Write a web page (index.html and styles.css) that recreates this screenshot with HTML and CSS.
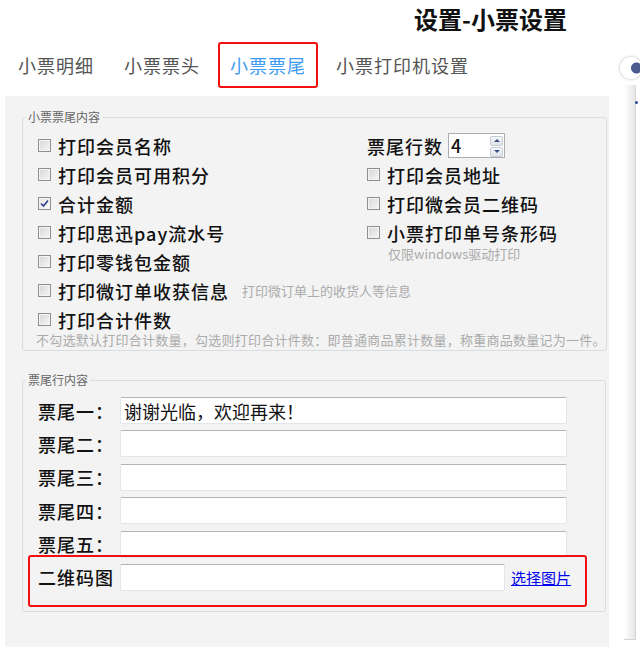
FILE: index.html
```html
<!DOCTYPE html>
<html lang="zh-CN">
<head>
    <meta charset="UTF-8">
    <title>设置-小票设置</title>
    <link rel="stylesheet" href="styles.css">
</head>
<body>
    <div class="page">
        <div class="main">
            <h1 class="title">设置-小票设置</h1>

            <div class="tabs">
                <span class="tab">小票明细</span>
                <span class="tab">小票票头</span>
                <span class="tab active">小票票尾</span>
                <span class="tab">小票打印机设置</span>
            </div>

            <div class="panel">
                <!-- 小票票尾内容 -->
                <fieldset class="group tail-opts">
                    <legend>小票票尾内容</legend>
                    <div class="cols">
                        <div class="col-left">
                            <label class="opt"><span class="cb"></span>打印会员名称</label>
                            <label class="opt"><span class="cb"></span>打印会员可用积分</label>
                            <label class="opt"><span class="cb on"><svg width="9" height="9" viewBox="0 0 9 9"><path d="M1 4.5 L3.5 7 L8 1.5" fill="none" stroke="#2b3f8f" stroke-width="1.6"/></svg></span>合计金额</label>
                            <label class="opt"><span class="cb"></span>打印思迅pay流水号</label>
                            <label class="opt"><span class="cb"></span>打印零钱包金额</label>
                            <label class="opt"><span class="cb"></span>打印微订单收获信息<span class="hint inline">打印微订单上的收货人等信息</span></label>
                            <label class="opt"><span class="cb"></span>打印合计件数</label>
                        </div>
                        <div class="col-right">
                            <div class="opt">
                                票尾行数
                                <div class="spin">
                                    <span class="spin-val">4</span>
                                    <span class="spin-btns">
                                        <span class="spin-btn"><i class="up"></i></span>
                                        <span class="spin-btn"><i class="down"></i></span>
                                    </span>
                                </div>
                            </div>
                            <label class="opt"><span class="cb"></span>打印会员地址</label>
                            <label class="opt"><span class="cb"></span>打印微会员二维码</label>
                            <label class="opt"><span class="cb"></span>小票打印单号条形码</label>
                            <div class="hint sub">仅限windows驱动打印</div>
                        </div>
                    </div>
                    <p class="hint note">不勾选默认打印合计数量，勾选则打印合计件数：即普通商品累计数量，称重商品数量记为一件。</p>
                </fieldset>

                <!-- 票尾行内容 -->
                <fieldset class="group tail-lines">
                    <legend>票尾行内容</legend>
                    <div class="line"><span class="line-label">票尾一：</span><input class="text-field" type="text" value="谢谢光临，欢迎再来！"></div>
                    <div class="line"><span class="line-label">票尾二：</span><input class="text-field" type="text"></div>
                    <div class="line"><span class="line-label">票尾三：</span><input class="text-field" type="text"></div>
                    <div class="line"><span class="line-label">票尾四：</span><input class="text-field" type="text"></div>
                    <div class="line"><span class="line-label">票尾五：</span><input class="text-field" type="text"></div>
                    <div class="line qr-line"><span class="line-label">二维码图</span><input class="text-field short" type="text"><a class="pick" href="#">选择图片</a></div>
                </fieldset>
            </div>
        </div>

        <div class="side">
            <span class="side-knob"></span>
            <span class="side-dot"></span>
            <div class="side-bar"></div>
        </div>
    </div>
</body>
</html>
```

FILE: styles.css
```css
/* 小票设置 - 票尾 */
* {
    margin: 0;
    padding: 0;
    box-sizing: border-box;
}

body {
    font-family: "Noto Sans CJK SC", "Microsoft YaHei", sans-serif;
    background-color: #fff;
    color: #111;
}

.page {
    display: flex;
    height: 647px;
}

.main {
    width: 609px;
}

.title {
    height: 42px;
    padding: 3px 42px 0 0;
    text-align: right;
    font-size: 24px;
    font-weight: bold;
    line-height: 32px;
}

/* tabs */
.tabs {
    display: flex;
    gap: 6px;
    padding-left: 6px;
}

.tab {
    height: 46px;
    padding: 0 10px;
    border: 2px solid transparent;
    border-radius: 3px;
    font-size: 18px;
    letter-spacing: 1px;
    line-height: 42px;
    color: #555;
}

.tab.active {
    border-color: #f01010;
    color: #3d9cf2;
}

.panel {
    margin: 8px 0 0 5px;
    min-height: 551px;
    padding: 13px 3px 0 17px;
    background-color: #f3f3f3;
}

.group {
    border: 1px solid #d6dde3;
    border-radius: 3px;
}

.group legend {
    margin-left: -12px;
    padding: 0 2px;
    font-size: 12px;
    line-height: 16px;
    color: #666;
}

/* 小票票尾内容 */
.tail-opts {
    padding: 6px 0 4px 15px;
}

.cols {
    display: flex;
}

.col-left {
    width: 329px;
}

.col-right {
    flex: 1;
}

.opt {
    display: flex;
    align-items: center;
    gap: 7px;
    height: 29px;
    font-size: 18px;
    font-weight: 500;
    letter-spacing: 1px;
    white-space: nowrap;
}

.cb {
    display: inline-flex;
    flex: none;
    align-items: center;
    justify-content: center;
    width: 13px;
    height: 13px;
    border: 1px solid #8e8f8f;
    background: linear-gradient(135deg, #d6d6d6, #f6f6f6);
    box-shadow: inset 0 0 0 1px #f4f4f4;
}

.cb.on {
    background: linear-gradient(135deg, #e4e4e4, #fafafa);
}

.hint {
    font-size: 13px;
    font-weight: normal;
    letter-spacing: 0;
    color: #ababab;
}

.hint.inline {
    margin-left: 6px;
}

.hint.sub {
    margin-left: 21px;
    line-height: 14px;
}

.hint.note {
    margin-left: -2px;
    line-height: 12px;
    letter-spacing: 0.25px;
    white-space: nowrap;
}

/* 票尾行数 spinner */
.spin {
    display: flex;
    flex: none;
    justify-content: space-between;
    width: 57px;
    height: 25px;
    margin-left: -2px;
    border: 1px solid #abadb3;
    background-color: #fff;
}

.spin-val {
    padding-left: 2px;
    font-size: 18px;
    line-height: 23px;
    letter-spacing: 0;
}

.spin-btns {
    display: flex;
    flex-direction: column;
    justify-content: center;
    gap: 1px;
    padding: 1px 1px 0 0;
}

.spin-btn {
    display: flex;
    align-items: center;
    justify-content: center;
    width: 13px;
    height: 10px;
    border: 1px solid #c3cbd3;
    border-radius: 2px;
    background: linear-gradient(#f6f7f9, #dfe4ea);
}

.spin-btn i {
    width: 0;
    height: 0;
    border-left: 3px solid transparent;
    border-right: 3px solid transparent;
}

.spin-btn .up {
    border-bottom: 3px solid #3a4f86;
}

.spin-btn .down {
    border-top: 3px solid #3a4f86;
}

/* 票尾行内容 */
.tail-lines {
    margin-top: 21px;
    padding: 9px 0 20px 15px;
}

.line {
    display: flex;
    align-items: center;
    height: 27px;
    margin-bottom: 6.4px;
}

.line:last-child {
    margin-bottom: 0;
}

.line-label {
    width: 82px;
    font-size: 18px;
    font-weight: 500;
    letter-spacing: 1px;
}

.text-field {
    width: 447px;
    height: 27px;
    padding: 0 3px;
    border: 1px solid #e0e6ec;
    border-top-color: #b4b4b4;
    border-radius: 2px;
    background-color: #fff;
    font-family: inherit;
    font-size: 18px;
    color: #111;
    outline: none;
}

.text-field.short {
    width: 385px;
}

.pick {
    margin-left: 6px;
    font-size: 15px;
    color: #0000ee;
}

.qr-line {
    position: relative;
}

/* red marker round the qr row */
.qr-line::before {
    content: '';
    position: absolute;
    left: -10px;
    top: -9px;
    right: 18px;
    bottom: -16px;
    border: 2px solid #f01010;
    border-radius: 3px;
}

/* right edge strip */
.side {
    position: relative;
    flex: 1;
}

.side-bar {
    width: 12px;
    height: 555px;
    margin: 85px 0 0 15px;
    background: linear-gradient(to right, #fff, #e6e6e6);
    border-right: 1px solid #d4d4d4;
    border-bottom: 1px solid #d4d4d4;
}

.side-knob {
    position: absolute;
    left: 11px;
    top: 57px;
    width: 22px;
    height: 22px;
    border-radius: 50%;
    background: radial-gradient(circle at 75% 50%, #4a5b8f 0 5px, #fff 6px);
    box-shadow: 0 0 3px #aaa;
}

.side-dot {
    position: absolute;
    left: 26px;
    top: 101px;
    width: 3px;
    height: 3px;
    border-radius: 50%;
    background-color: #2a4aa0;
}
```
